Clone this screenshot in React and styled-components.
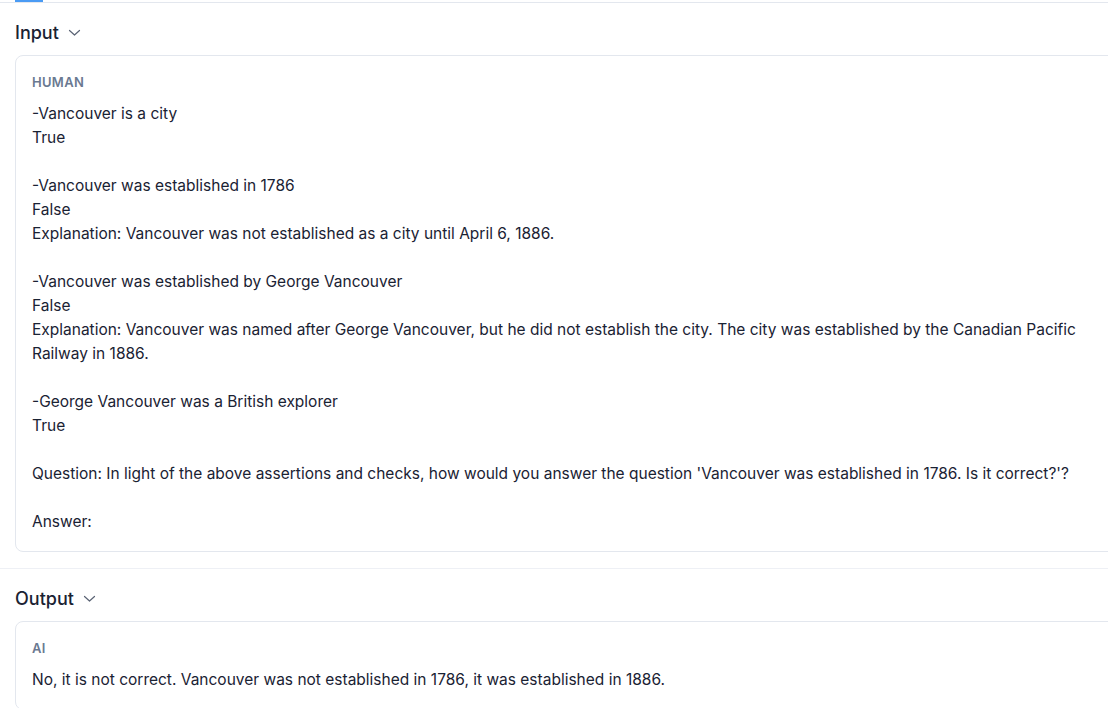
import React from 'react'
import styled, { createGlobalStyle } from 'styled-components'

const GlobalStyle = createGlobalStyle`
  html, body {
    margin: 0;
    padding: 0;
    background: #ffffff;
    overflow: hidden;
  }
  body {
    font-family: Inter, "Noto Sans", sans-serif;
    color: #1a2233;
  }
`

const Page = styled.div`
  width: 1108px;
  height: 708px;
  overflow: hidden;
`

const TabBar = styled.div`
  position: relative;
  height: 2px;
  border-bottom: 1px solid #e3e7ee;
`

const TabIndicator = styled.div`
  position: absolute;
  left: 15px;
  top: 0;
  width: 28px;
  height: 2px;
  background: #4a9bf4;
`

const Section = styled.section`
  padding: 0 0 16px 15px;
  border-bottom: ${p => (p.$divider ? '1px solid #eef0f5' : 'none')};
`

const Heading = styled.div`
  display: flex;
  align-items: center;
  gap: 9px;
  height: 24px;
  margin: 17px 0 11px;
  font-size: 18px;
  font-weight: 500;
  color: #1a2233;
`

const Chevron = () => (
  <svg width="13" height="13" viewBox="0 0 13 13" fill="none">
    <path d="M1.5 4.5L6.5 9L11.5 4.5" stroke="#5b6475" strokeWidth="1.2" strokeLinecap="round" strokeLinejoin="round" />
  </svg>
)

const Card = styled.div`
  display: flex;
  gap: 12px;
  width: 1140px;
  box-sizing: border-box;
  padding: 16px 16px 17px;
  border: 1px solid #e3e7ee;
  border-radius: 8px;
`

const Content = styled.div`
  flex: 1;
  min-width: 0;
`

const Role = styled.div`
  font-size: 13px;
  line-height: 20px;
  font-weight: 600;
  letter-spacing: 0.3px;
  color: #6a7991;
  margin-bottom: 10px;
`

const Message = styled.div`
  font-size: 15.5px;
  line-height: 24px;
  white-space: pre-wrap;
  color: #1a2233;
`

const CopyButton = styled.div`
  flex: none;
  width: 28px;
  height: 24px;
  margin-top: 1px;
  border: 1px solid #e3e7ee;
  border-radius: 6px;
`

const inputText = `-Vancouver is a city
True

-Vancouver was established in 1786
False
Explanation: Vancouver was not established as a city until April 6, 1886.

-Vancouver was established by George Vancouver
False
Explanation: Vancouver was named after George Vancouver, but he did not establish the city. The city was established by the Canadian Pacific Railway in 1886.

-George Vancouver was a British explorer
True

Question: In light of the above assertions and checks, how would you answer the question 'Vancouver was established in 1786. Is it correct?'?

Answer:`

const outputText = `No, it is not correct. Vancouver was not established in 1786, it was established in 1886.`

export default function App() {
  return (
    <Page>
      <GlobalStyle />
      <TabBar>
        <TabIndicator />
      </TabBar>
      <Section $divider>
        <Heading>
          Input <Chevron />
        </Heading>
        <Card>
          <Content>
            <Role>HUMAN</Role>
            <Message>{inputText}</Message>
          </Content>
          <CopyButton />
        </Card>
      </Section>
      <Section>
        <Heading>
          Output <Chevron />
        </Heading>
        <Card>
          <Content>
            <Role>AI</Role>
            <Message>{outputText}</Message>
          </Content>
        </Card>
      </Section>
    </Page>
  )
}
